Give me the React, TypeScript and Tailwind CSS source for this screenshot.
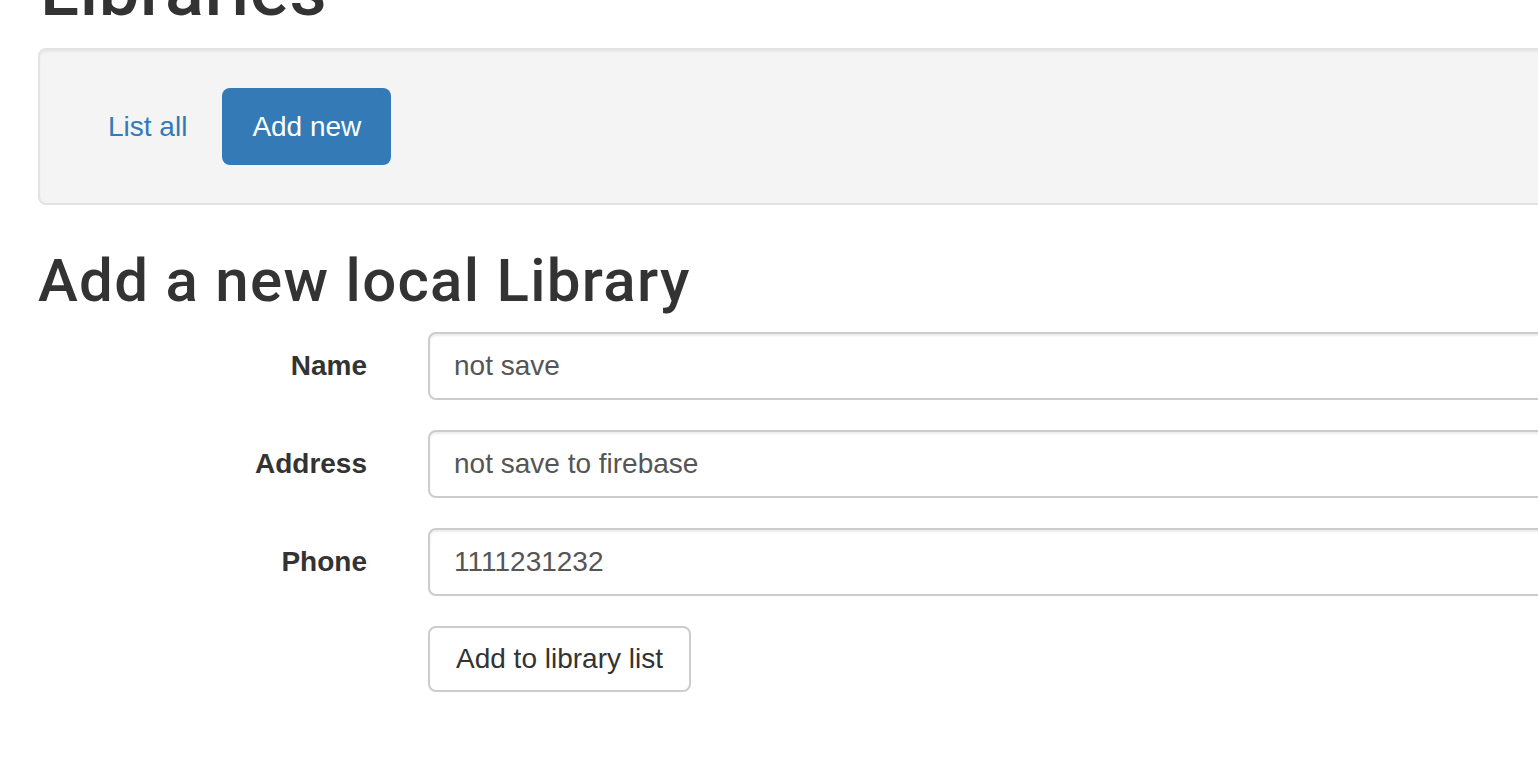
function Field({ label, value }: { label: string; value: string }) {
  return (
    <div className="flex items-center">
      <label className="w-[329px] shrink-0 text-right text-[28px] font-bold text-[#333]">
        {label}
      </label>
      <input
        readOnly
        value={value}
        className="ml-[61px] h-[68px] flex-1 rounded-[8px] border-2 border-[#ccc] bg-white px-[24px] text-[28px] text-[#555] shadow-[inset_0_2px_2px_rgba(0,0,0,0.075)] outline-none"
      />
    </div>
  );
}

export default function App() {
  return (
    <div className="h-[774px] w-[1538px] overflow-hidden bg-white font-['Liberation_Sans',Arial,sans-serif] text-[#333]">
      <div className="w-[1640px] pl-[38px]">
        <h1 className="mt-[-49px] pl-[2px] font-['Roboto',sans-serif] text-[72px] leading-[1.1] font-medium tracking-[0.8px]">
          Libraries
        </h1>

        <div className="mt-[18px] rounded-[8px] border-2 border-[#e3e3e3] bg-[#f4f4f4] p-[38px] shadow-[inset_0_2px_2px_rgba(0,0,0,0.05)]">
          <ul className="flex items-center">
            <li>
              <a href="#" className="block px-[30px] py-[20px] text-[28px] leading-[37px] text-[#337ab7]">
                List all
              </a>
            </li>
            <li className="ml-[5px]">
              <a href="#" className="block rounded-[8px] bg-[#337ab7] px-[30px] py-[20px] text-[28px] leading-[37px] text-white">
                Add new
              </a>
            </li>
          </ul>
        </div>

        <h2 className="mt-[43px] font-['Roboto',sans-serif] text-[60px] leading-[1.1] font-medium tracking-[1.3px]">
          Add a new local Library
        </h2>

        <form className="mt-[18px] flex flex-col gap-[30px]">
          <Field label="Name" value="not save" />
          <Field label="Address" value="not save to firebase" />
          <Field label="Phone" value="1111231232" />
          <div className="pl-[390px]">
            <button
              type="button"
              className="h-[66px] rounded-[8px] border-2 border-[#ccc] bg-white px-[26px] text-[28px] text-[#333]"
            >
              Add to library list
            </button>
          </div>
        </form>
      </div>
    </div>
  );
}
